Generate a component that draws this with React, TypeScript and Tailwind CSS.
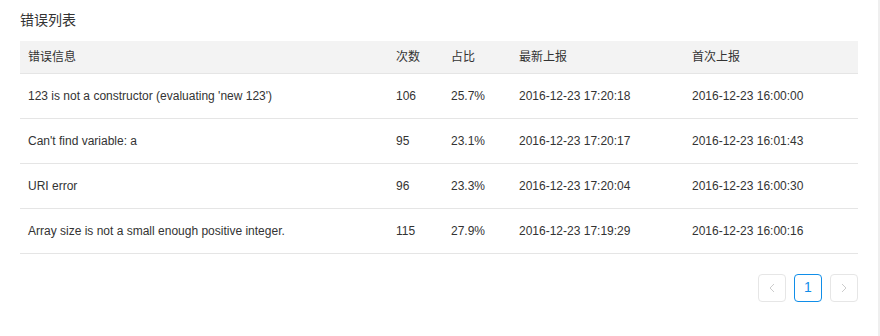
import React from 'react';

const rows = [
  { msg: "123 is not a constructor (evaluating 'new 123')", count: 106, pct: '25.7%', last: '2016-12-23 17:20:18', first: '2016-12-23 16:00:00' },
  { msg: "Can't find variable: a", count: 95, pct: '23.1%', last: '2016-12-23 17:20:17', first: '2016-12-23 16:01:43' },
  { msg: 'URI error', count: 96, pct: '23.3%', last: '2016-12-23 17:20:04', first: '2016-12-23 16:00:30' },
  { msg: 'Array size is not a small enough positive integer.', count: 115, pct: '27.9%', last: '2016-12-23 17:19:29', first: '2016-12-23 16:00:16' },
];

const font = "font-['Liberation_Sans','Noto_Sans_CJK_SC',sans-serif]";

export default function App() {
  return (
    <div className={`flex w-[880px] h-[336px] bg-white text-[#333] ${font}`}>
      <div className="flex-1 px-5 pt-[10px]">
        <h2 className="text-[14px] leading-5 h-5 text-[#333]">错误列表</h2>

        <table className="mt-[11px] w-[838px] table-fixed border-collapse text-[12px]">
          <colgroup>
            <col className="w-[368px]" />
            <col className="w-[55px]" />
            <col className="w-[68px]" />
            <col className="w-[173px]" />
            <col className="w-[174px]" />
          </colgroup>
          <thead>
            <tr className="bg-[#f3f3f3] h-[32px] border-b border-[#e5e5e5]">
              <th className="px-2 text-left font-normal">错误信息</th>
              <th className="px-2 text-left font-normal">次数</th>
              <th className="px-2 text-left font-normal">占比</th>
              <th className="px-2 text-left font-normal">最新上报</th>
              <th className="px-2 text-left font-normal">首次上报</th>
            </tr>
          </thead>
          <tbody>
            {rows.map((r) => (
              <tr key={r.msg} className="h-[45px] border-b border-[#e5e5e5]">
                <td className="px-2">{r.msg}</td>
                <td className="px-2">{r.count}</td>
                <td className="px-2">{r.pct}</td>
                <td className="px-2">{r.last}</td>
                <td className="px-2">{r.first}</td>
              </tr>
            ))}
          </tbody>
        </table>

        {/* Pagination */}
        <div className="flex justify-end gap-2 mt-[20px] w-[838px]">
          <button className="w-7 h-7 rounded border border-[#e6e6e6] flex items-center justify-center text-[#ccc]">
            <svg width="6" height="10" viewBox="0 0 6 10" fill="none" stroke="currentColor" strokeWidth="1">
              <path d="M5 1 L1 5 L5 9" />
            </svg>
          </button>
          <button className="w-7 h-7 rounded border border-[#108ee9] flex items-center justify-center text-[#108ee9] text-[14px]">
            1
          </button>
          <button className="w-7 h-7 rounded border border-[#e6e6e6] flex items-center justify-center text-[#ccc]">
            <svg width="6" height="10" viewBox="0 0 6 10" fill="none" stroke="currentColor" strokeWidth="1">
              <path d="M1 1 L5 5 L1 9" />
            </svg>
          </button>
        </div>
      </div>
      <div className="w-[2px] bg-[#efefef]" />
    </div>
  );
}
